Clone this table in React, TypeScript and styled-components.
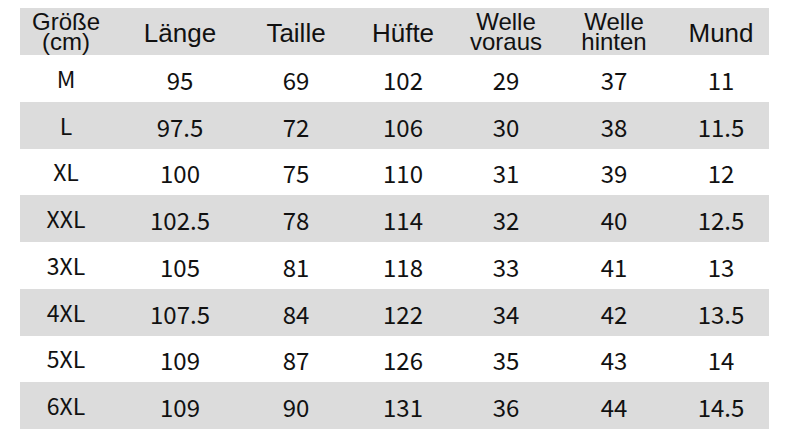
import React from 'react';
import styled, { createGlobalStyle } from 'styled-components';

const headers: string[][] = [
  ['Größe', '(cm)'],
  ['Länge'],
  ['Taille'],
  ['Hüfte'],
  ['Welle', 'voraus'],
  ['Welle', 'hinten'],
  ['Mund'],
];

const rows: string[][] = [
  ['M', '95', '69', '102', '29', '37', '11'],
  ['L', '97.5', '72', '106', '30', '38', '11.5'],
  ['XL', '100', '75', '110', '31', '39', '12'],
  ['XXL', '102.5', '78', '114', '32', '40', '12.5'],
  ['3XL', '105', '81', '118', '33', '41', '13'],
  ['4XL', '107.5', '84', '122', '34', '42', '13.5'],
  ['5XL', '109', '87', '126', '35', '43', '14'],
  ['6XL', '109', '90', '131', '36', '44', '14.5'],
];

function App() {
  return (
    <Page>
      <GlobalStyle />
      <Table>
        <HeaderRow>
          {headers.map((lines, i) => (
            <HeaderCell key={i} $twoLine={lines.length > 1}>
              {lines.map((l) => (
                <span key={l}>{l}</span>
              ))}
            </HeaderCell>
          ))}
        </HeaderRow>
        {rows.map((row, r) => (
          <Row key={row[0]} $shaded={r % 2 === 1}>
            {row.map((v, c) => (
              <Cell key={c} $size={c === 0}>
                {v}
              </Cell>
            ))}
          </Row>
        ))}
      </Table>
    </Page>
  );
}

const GlobalStyle = createGlobalStyle`
  html, body {
    margin: 0;
    padding: 0;
    background: #ffffff;
  }
`;

const Page = styled.div`
  width: 790px;
  height: 446px;
  padding: 8px 21px 0 20px;
  box-sizing: border-box;
  background: #ffffff;
  color: #111111;
`;

const Table = styled.div`
  display: flex;
  flex-direction: column;
  width: 749px;
`;

const columns = '92px 136px 96px 118px 88px 128px 86px';

const HeaderRow = styled.div`
  display: grid;
  grid-template-columns: ${columns};
  height: 47px;
  background: #dcdcdc;
  font-family: 'Liberation Sans', Arial, sans-serif;
`;

const HeaderCell = styled.div<{ $twoLine: boolean }>`
  display: flex;
  flex-direction: column;
  align-items: center;
  justify-content: center;
  font-size: ${(p) => (p.$twoLine ? '24px' : '26px')};
  line-height: ${(p) => (p.$twoLine ? '20px' : '28px')};
  padding-top: ${(p) => (p.$twoLine ? '0' : '3px')};
  white-space: nowrap;
`;

const Row = styled.div<{ $shaded: boolean }>`
  display: grid;
  grid-template-columns: ${columns};
  height: 46.75px;
  background: ${(p) => (p.$shaded ? '#dcdcdc' : '#ffffff')};
  font-family: 'Noto Sans CJK SC', 'Noto Sans', sans-serif;
`;

const Cell = styled.div<{ $size: boolean }>`
  display: flex;
  align-items: center;
  justify-content: center;
  font-size: ${(p) => (p.$size ? '23px' : '24px')};
  padding-top: ${(p) => (p.$size ? '0' : '3px')};
  line-height: 1;
`;

export default App;
